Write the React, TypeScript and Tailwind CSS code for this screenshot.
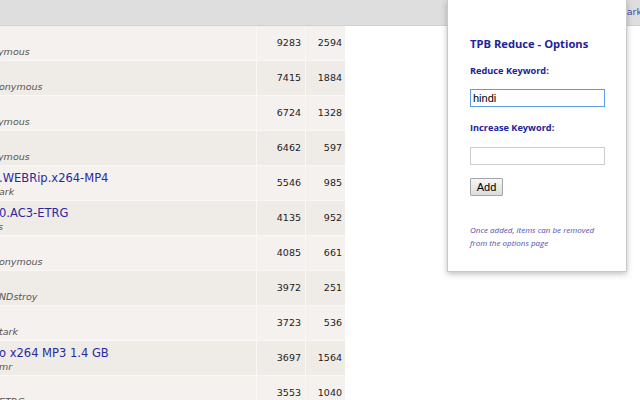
const rows = [
  { title: "", sub: "ymous", subIndent: "-ml-[2px]", se: "9283", le: "2594" },
  { title: "", sub: "onymous", subIndent: "-ml-[1px]", se: "7415", le: "1884" },
  { title: "", sub: "ymous", subIndent: "-ml-[2px]", se: "6724", le: "1328" },
  { title: "", sub: "ymous", subIndent: "-ml-[2px]", se: "6462", le: "597" },
  { title: ".WEBRip.x264-MP4", sub: "ark", subIndent: "-ml-[1px]", se: "5546", le: "985" },
  { title: "0.AC3-ETRG", sub: "s", subIndent: "-ml-[2px]", se: "4135", le: "952" },
  { title: "", sub: "onymous", subIndent: "-ml-[1px]", se: "4085", le: "661" },
  { title: "", sub: "NDstroy", subIndent: "-ml-[1px]", se: "3972", le: "251" },
  { title: "", sub: "tark", subIndent: "-ml-[1px]", se: "3723", le: "536" },
  { title: "o x264 MP3 1.4 GB", sub: "mr", subIndent: "-ml-[1px]", se: "3697", le: "1564" },
  { title: "", sub: "ETRG", subIndent: "-ml-[1px]", se: "3553", le: "1040" },
];

function ResultRow({ row, odd }: { row: (typeof rows)[number]; odd: boolean }) {
  return (
    <div
      className={`flex h-[35px] border-b border-[#faf8f6] ${odd ? "bg-[#f5f1ee]" : "bg-[#efebe6]"}`}
    >
      <div className="w-[257px] shrink-0 overflow-hidden border-r border-[#faf8f6]">
        <div className="h-[20px] pt-[5px] whitespace-nowrap text-[11.5px] leading-[14px] text-[#2a2aa0] -ml-[1px]">
          {row.title}
        </div>
        <div className={`whitespace-nowrap text-[9.5px] italic leading-[12px] text-[#555] ${row.subIndent}`}>
          {row.sub}
        </div>
      </div>
      <div className="w-[49px] shrink-0 flex items-center justify-end pr-[4px] border-r border-[#faf8f6] text-[9.5px] text-[#222]">
        {row.se}
      </div>
      <div className="w-[39px] shrink-0 flex items-center justify-end pr-[3px] text-[9.5px] text-[#222]">
        {row.le}
      </div>
    </div>
  );
}

function OptionsPopup() {
  return (
    <div
      className="absolute left-[447px] top-0 w-[180px] h-[272px] bg-white border border-[#c9c9c9] border-t-0 shadow-[0_2px_6px_rgba(0,0,0,0.25)] pl-[22px] pt-[36px] flex flex-col items-start"
      style={{ fontFamily: '"Open Sans", "Noto Sans", sans-serif' }}
    >
      <div className="text-[11.2px] font-bold leading-[16px] text-[#22229a]">TPB Reduce - Options</div>
      <div className="mt-[12px] text-[9.2px] font-bold leading-[14px] text-[#22229a]">Reduce Keyword:</div>
      <input
        defaultValue="hindi"
        className="mt-[11px] w-[135px] h-[18px] border border-[#5b9bea] outline-none px-[2px] text-[11px] text-black"
        style={{ fontFamily: '"Liberation Sans", Arial, sans-serif' }}
      />
      <div className="mt-[14px] text-[9.2px] font-bold leading-[14px] text-[#22229a]">Increase Keyword:</div>
      <input
        className="mt-[12px] w-[135px] h-[18px] border border-[#cdcdcd] outline-none px-[2px] text-[11px]"
        style={{ fontFamily: '"Liberation Sans", Arial, sans-serif' }}
      />
      <button
        className="mt-[13px] w-[33px] h-[18px] border border-[#a6a6a6] rounded-[1px] bg-gradient-to-b from-[#f6f6f6] to-[#dcdcdc] text-[11px] leading-[16px] text-black"
        style={{ fontFamily: '"Liberation Sans", Arial, sans-serif' }}
      >
        Add
      </button>
      <p className="mt-[27px] text-[8px] italic leading-[13px] text-[#5050a8]">
        Once added, items can be removed
        <br />
        from the options page
      </p>
    </div>
  );
}

export default function App() {
  return (
    <div
      className="relative w-[640px] h-[400px] overflow-hidden bg-white"
      style={{ fontFamily: '"DejaVu Sans", Verdana, sans-serif' }}
    >
      <div className="h-[26px] bg-[#dedede] border-b border-[#d0d0d0] flex items-center justify-end">
        <span className="text-[9.5px] text-[#4a4aa0] -mr-[2px]">Tony Stark</span>
      </div>
      <div className="w-[345px]">
        {rows.map((row, i) => (
          <ResultRow key={i} row={row} odd={i % 2 === 0} />
        ))}
      </div>
      <OptionsPopup />
    </div>
  );
}
